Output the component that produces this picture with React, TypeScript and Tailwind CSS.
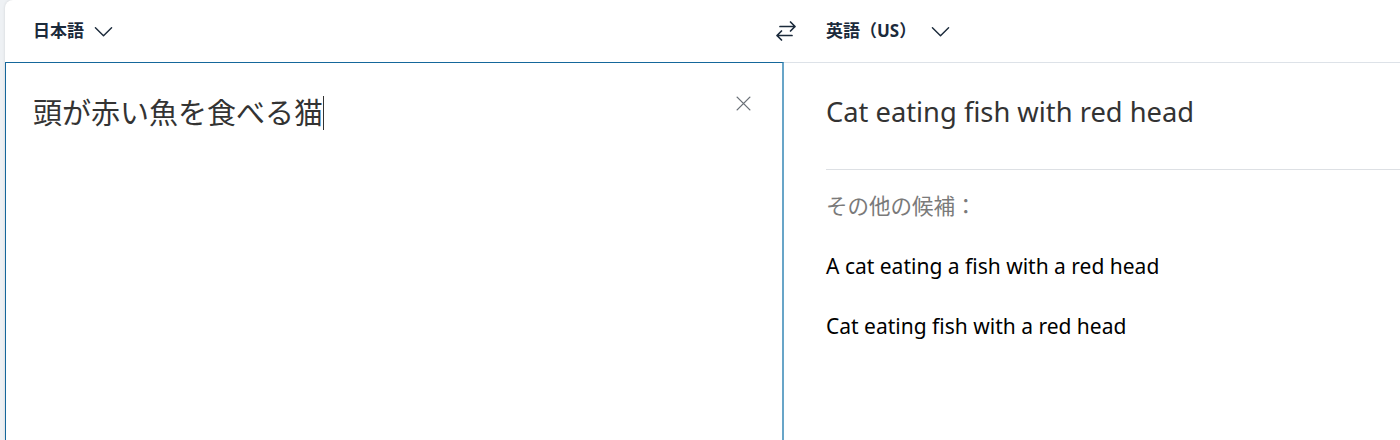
import React from 'react';

const jp = { fontFamily: '"Noto Sans", "Noto Sans CJK JP", sans-serif' };

const Chevron: React.FC<{ className?: string }> = ({ className }) => (
    <svg viewBox="0 0 20 20" className={className} fill="none" stroke="currentColor" strokeWidth="1.5" strokeLinecap="round" strokeLinejoin="round">
        <path d="M1.5 6 10 14.5 18.5 6" />
    </svg>
);

const SwapIcon: React.FC<{ className?: string }> = ({ className }) => (
    <svg viewBox="0 0 24 24" className={className} fill="none" stroke="currentColor" strokeWidth="1.7" strokeLinecap="round" strokeLinejoin="round">
        <path d="M6 7.5h15M16.5 3 21 7.5 16.5 12" />
        <path d="M18 16.5H3M7.5 12 3 16.5 7.5 21" />
    </svg>
);

const CloseIcon: React.FC<{ className?: string }> = ({ className }) => (
    <svg viewBox="0 0 16 16" className={className} fill="none" stroke="currentColor" strokeWidth="1.3" strokeLinecap="round">
        <path d="M2 2l12 12M14 2 2 14" />
    </svg>
);

const alternatives = ['A cat eating a fish with a red head', 'Cat eating fish with a red head'];

export default function App() {
    return (
        <div className="w-[1400px] h-[440px] overflow-hidden bg-[#eef1f4] pl-[5px]" style={jp}>
            <div className="h-full bg-white rounded-tl-lg shadow-[0_0_3px_rgba(0,0,0,0.12)] flex flex-col">
                <div className="h-[62px] flex items-center shrink-0">
                    <div className="w-[769px] flex items-center pl-[28px]">
                        <button className="flex items-center gap-[10px] text-[17px] font-bold text-[#1b2a3b]">
                            日本語
                            <Chevron className="w-[19px] h-[19px]" />
                        </button>
                    </div>
                    <div className="text-[#1b2a3b]">
                        <SwapIcon className="w-[24px] h-[24px]" />
                    </div>
                    <div className="flex items-center pl-[28px]">
                        <button className="flex items-center gap-[15px] text-[17px] font-bold text-[#1b2a3b]">
                            英語（US）
                            <Chevron className="w-[19px] h-[19px]" />
                        </button>
                    </div>
                </div>
                <div className="flex flex-1 min-h-0">
                    <div className="w-[779px] shrink-0 border-l border-t border-[#15679b] border-r-2 border-r-[#68a5c8] flex items-start pl-[27px] pr-[30px] pt-[30px]">
                        <div className="flex-1 text-[29px] leading-[40px] text-[#333] flex items-center">
                            頭が赤い魚を食べる猫<span className="inline-block w-px h-[34px] bg-[#333]" />
                        </div>
                        <button className="mt-[2px] text-[#6b7178]">
                            <CloseIcon className="w-[17px] h-[17px]" />
                        </button>
                    </div>
                    <div className="flex-1 border-t border-[#dde2e8] pl-[42px] pt-[30px]">
                        <p className="text-[27.3px] leading-[38px] text-[#333]">Cat eating fish with red head</p>
                        <div className="mt-[38px] border-t border-[#dde0e4]" />
                        <p className="mt-[22px] text-[21.5px] leading-[28px] text-[#7a7a7a]">その他の候補：</p>
                        <div className="mt-[32px] flex flex-col gap-[32px]">
                            {alternatives.map(a => (
                                <p key={a} className="text-[21px] leading-[28px] text-black">{a}</p>
                            ))}
                        </div>
                    </div>
                </div>
            </div>
        </div>
    );
}
